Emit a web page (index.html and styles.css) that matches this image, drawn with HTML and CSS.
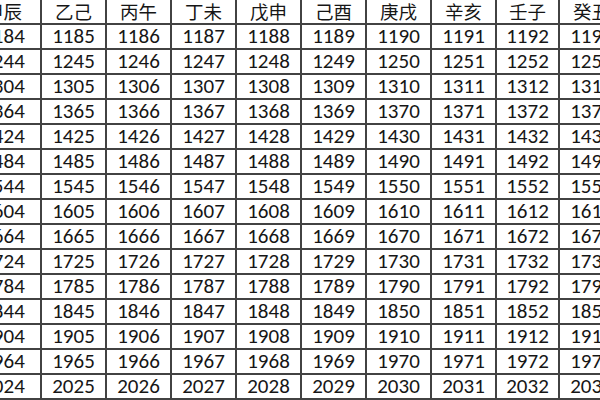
FILE: index.html
```html
<!DOCTYPE html>
<html lang="zh">
<head>
<meta charset="utf-8">
<title>干支纪年表</title>
<link rel="stylesheet" href="styles.css">
</head>
<body>
<div class="sheet">
  <div class="grid">
    <div class="c h">甲辰</div><div class="c h">乙己</div><div class="c h">丙午</div><div class="c h">丁未</div><div class="c h">戊申</div><div class="c h">己酉</div><div class="c h">庚戌</div><div class="c h">辛亥</div><div class="c h">壬子</div><div class="c h">癸丑</div>
    <div class="c">1184</div><div class="c">1185</div><div class="c">1186</div><div class="c">1187</div><div class="c">1188</div><div class="c">1189</div><div class="c">1190</div><div class="c">1191</div><div class="c">1192</div><div class="c">1193</div>
    <div class="c">1244</div><div class="c">1245</div><div class="c">1246</div><div class="c">1247</div><div class="c">1248</div><div class="c">1249</div><div class="c">1250</div><div class="c">1251</div><div class="c">1252</div><div class="c">1253</div>
    <div class="c">1304</div><div class="c">1305</div><div class="c">1306</div><div class="c">1307</div><div class="c">1308</div><div class="c">1309</div><div class="c">1310</div><div class="c">1311</div><div class="c">1312</div><div class="c">1313</div>
    <div class="c">1364</div><div class="c">1365</div><div class="c">1366</div><div class="c">1367</div><div class="c">1368</div><div class="c">1369</div><div class="c">1370</div><div class="c">1371</div><div class="c">1372</div><div class="c">1373</div>
    <div class="c">1424</div><div class="c">1425</div><div class="c">1426</div><div class="c">1427</div><div class="c">1428</div><div class="c">1429</div><div class="c">1430</div><div class="c">1431</div><div class="c">1432</div><div class="c">1433</div>
    <div class="c">1484</div><div class="c">1485</div><div class="c">1486</div><div class="c">1487</div><div class="c">1488</div><div class="c">1489</div><div class="c">1490</div><div class="c">1491</div><div class="c">1492</div><div class="c">1493</div>
    <div class="c">1544</div><div class="c">1545</div><div class="c">1546</div><div class="c">1547</div><div class="c">1548</div><div class="c">1549</div><div class="c">1550</div><div class="c">1551</div><div class="c">1552</div><div class="c">1553</div>
    <div class="c">1604</div><div class="c">1605</div><div class="c">1606</div><div class="c">1607</div><div class="c">1608</div><div class="c">1609</div><div class="c">1610</div><div class="c">1611</div><div class="c">1612</div><div class="c">1613</div>
    <div class="c">1664</div><div class="c">1665</div><div class="c">1666</div><div class="c">1667</div><div class="c">1668</div><div class="c">1669</div><div class="c">1670</div><div class="c">1671</div><div class="c">1672</div><div class="c">1673</div>
    <div class="c">1724</div><div class="c">1725</div><div class="c">1726</div><div class="c">1727</div><div class="c">1728</div><div class="c">1729</div><div class="c">1730</div><div class="c">1731</div><div class="c">1732</div><div class="c">1733</div>
    <div class="c">1784</div><div class="c">1785</div><div class="c">1786</div><div class="c">1787</div><div class="c">1788</div><div class="c">1789</div><div class="c">1790</div><div class="c">1791</div><div class="c">1792</div><div class="c">1793</div>
    <div class="c">1844</div><div class="c">1845</div><div class="c">1846</div><div class="c">1847</div><div class="c">1848</div><div class="c">1849</div><div class="c">1850</div><div class="c">1851</div><div class="c">1852</div><div class="c">1853</div>
    <div class="c">1904</div><div class="c">1905</div><div class="c">1906</div><div class="c">1907</div><div class="c">1908</div><div class="c">1909</div><div class="c">1910</div><div class="c">1911</div><div class="c">1912</div><div class="c">1913</div>
    <div class="c">1964</div><div class="c">1965</div><div class="c">1966</div><div class="c">1967</div><div class="c">1968</div><div class="c">1969</div><div class="c">1970</div><div class="c">1971</div><div class="c">1972</div><div class="c">1973</div>
    <div class="c">2024</div><div class="c">2025</div><div class="c">2026</div><div class="c">2027</div><div class="c">2028</div><div class="c">2029</div><div class="c">2030</div><div class="c">2031</div><div class="c">2032</div><div class="c">2033</div>
  </div>
</div>
</body>
</html>
```
FILE: styles.css
```css
html, body {
  margin: 0;
  padding: 0;
  background: #ffffff;
}
body {
  width: 600px;
  height: 400px;
  overflow: hidden;
}
.sheet {
  width: 600px;
  height: 400px;
  overflow: hidden;
  background: #ffffff;
}
.grid {
  display: grid;
  grid-template-columns: 73px 63px 63px 63px 63px 63px 63px 63px 61px 63px;
  grid-auto-rows: 23px;
  gap: 2px;
  background: #424242;
  margin-left: -33px;
  width: max-content;
  padding-bottom: 2px;
}
.c {
  background: #ffffff;
  display: flex;
  align-items: center;
  justify-content: center;
  font-family: Carlito, Calibri, "Open Sans", "Noto Sans CJK SC", sans-serif;
  font-size: 21px;
  color: #161616;
  line-height: 1;
  white-space: nowrap;
}
.h {
  font-family: "Noto Sans CJK SC", "Noto Sans", sans-serif;
  font-size: 18.5px;
  color: #161616;
}
```
